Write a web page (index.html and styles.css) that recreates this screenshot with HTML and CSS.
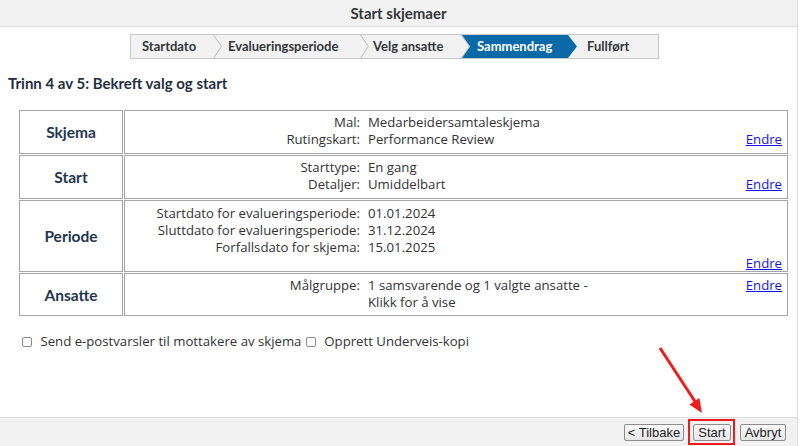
FILE: index.html
```html
<!DOCTYPE html>
<html lang="no">
<head>
    <meta charset="UTF-8">
    <meta name="viewport" content="width=device-width, initial-scale=1.0">
    <title>Start skjemaer</title>
    <link rel="stylesheet" href="styles.css">
</head>
<body>
    <div class="page">
        <div class="titlebar">Start skjemaer</div>

        <div class="content">
            <div class="wizard">
                <div class="step step-1">Startdato</div>
                <div class="step step-2">Evalueringsperiode</div>
                <div class="step step-3">Velg ansatte</div>
                <div class="step step-4 active">Sammendrag</div>
                <div class="step step-5">Fullført</div>
            </div>

            <h1 class="step-title">Trinn 4 av 5: Bekreft valg og start</h1>

            <table class="summary">
                <tr class="row-skjema">
                    <th>Skjema</th>
                    <td>
                        <div class="info">
                            <span class="label">Mal:</span><span class="value">Medarbeidersamtaleskjema</span>
                            <span class="label">Rutingskart:</span><span class="value">Performance Review</span>
                            <a class="endre" href="#">Endre</a>
                        </div>
                    </td>
                </tr>
                <tr class="row-start">
                    <th>Start</th>
                    <td>
                        <div class="info">
                            <span class="label">Starttype:</span><span class="value">En gang</span>
                            <span class="label">Detaljer:</span><span class="value">Umiddelbart</span>
                            <a class="endre" href="#">Endre</a>
                        </div>
                    </td>
                </tr>
                <tr class="row-periode">
                    <th>Periode</th>
                    <td>
                        <div class="info">
                            <span class="label">Startdato for evalueringsperiode:</span><span class="value">01.01.2024</span>
                            <span class="label">Sluttdato for evalueringsperiode:</span><span class="value">31.12.2024</span>
                            <span class="label">Forfallsdato for skjema:</span><span class="value">15.01.2025</span>
                            <a class="endre" href="#">Endre</a>
                        </div>
                    </td>
                </tr>
                <tr class="row-ansatte">
                    <th>Ansatte</th>
                    <td>
                        <div class="info">
                            <span class="label">Målgruppe:</span><span class="value">1 samsvarende og 1 valgte ansatte - Klikk for å vise</span>
                            <a class="endre" href="#">Endre</a>
                        </div>
                    </td>
                </tr>
            </table>

            <div class="options">
                <label><input type="checkbox"> Send e-postvarsler til mottakere av skjema</label>
                <label><input type="checkbox"> Opprett Underveis-kopi</label>
            </div>
        </div>

        <div class="footer">
            <button class="btn btn-back">&lt; Tilbake</button>
            <span class="highlight"><button class="btn btn-start">Start</button></span>
            <button class="btn btn-cancel">Avbryt</button>
        </div>

        <!-- annotation arrow pointing at the Start button -->
        <svg class="arrow" width="70" height="80" viewBox="0 0 70 80">
            <line x1="10" y1="8" x2="46" y2="63" stroke="#ee1c1c" stroke-width="3"/>
            <polygon points="52,73 39.4,64.5 49.4,57.9" fill="#ee1c1c"/>
        </svg>
    </div>
</body>
</html>
```

FILE: styles.css
```css
body {
    margin: 0;
    font-family: "Open Sans", "Noto Sans", sans-serif;
    color: #333;
    background: #fff;
}
.page {
    position: relative;
    width: 797px;
    height: 446px;
    border-right: 1px solid #d9d9d9;
    display: flex;
    flex-direction: column;
}
.titlebar {
    height: 26px;
    line-height: 26px;
    background: #f2f2f2;
    border-bottom: 1px solid #dcdcdc;
    text-align: center;
    font-family: "Lato", sans-serif;
    font-weight: bold;
    font-size: 15px;
    color: #32363a;
}
.content {
    flex: 1;
    padding: 0 8px;
}

/* wizard steps */
.wizard {
    display: inline-flex;
    margin: 7px 0 0 122px;
    border: 1px solid #c8c8c8;
    background: #f2f2f2;
}
.step {
    position: relative;
    height: 23px;
    line-height: 23px;
    padding-left: 13px;
    box-sizing: border-box;
    font-family: "Lato", sans-serif;
    font-weight: bold;
    font-size: 13px;
    color: #32363a;
}
.step-1 { width: 82px; padding-left: 11px; }
.step-2 { width: 147px; padding-left: 15px; }
.step-3 { width: 101px; }
.step-4 { width: 116px; padding-left: 16px; }
.step-5 { width: 81px; padding-left: 10px; }
.step-1::after, .step-2::after, .step-3::after {
    content: "";
    position: absolute;
    left: 100%;
    top: 0;
    width: 9px;
    height: 100%;
    background: #c4c4c4;
    clip-path: polygon(0 0, 1.2px 0, 100% 50%, 1.2px 100%, 0 100%, calc(100% - 1.2px) 50%);
    z-index: 1;
}
.step.active {
    background: #0a6aa8;
    color: #fff;
    clip-path: polygon(0 0, calc(100% - 9px) 0, 100% 50%, calc(100% - 9px) 100%, 0 100%, 9px 50%);
}

.step-title {
    margin: 15px 0 0 0;
    font-family: "Lato", sans-serif;
    font-size: 15px;
    line-height: 18px;
    color: #1f2f40;
}

/* summary table */
.summary {
    margin: 17px 0 0 10px;
    width: 771px;
    table-layout: fixed;
    border-collapse: separate;
    border-spacing: 1px;
    font-size: 13.2px;
}
.summary th, .summary td {
    border: 1px solid #a6a6a6;
}
.summary th {
    width: 102px;
    padding: 0;
    font-family: "Lato", sans-serif;
    font-size: 15.5px;
    color: #1f3650;
    text-align: center;
    vertical-align: middle;
}
.summary td {
    padding: 3px 5px 5px 0;
    line-height: 17px;
}
.info {
    display: grid;
    grid-template-columns: 235px 226px 1fr;
    column-gap: 8px;
}
.label {
    grid-column: 1;
    text-align: right;
    white-space: nowrap;
}
.value {
    grid-column: 2;
}
.endre {
    grid-column: 3;
    grid-row: 1 / span 2;
    align-self: end;
    justify-self: end;
    color: #1414e0;
}
.row-periode td {
    padding: 4px 5px 0 0;
}
.row-periode .endre {
    grid-row: 4;
    line-height: 15px;
}
.row-ansatte td {
    padding: 3px 5px 4px 0;
}
.row-ansatte .endre {
    grid-row: 1;
    align-self: start;
}

/* options */
.options {
    margin: 15px 0 0 13px;
    font-size: 13.2px;
    line-height: 18px;
}
.options input {
    appearance: none;
    width: 10px;
    height: 10px;
    margin: 0 5px 0 1px;
    border: 1px solid #8a8a8a;
    border-radius: 2px;
    background: #fff;
    vertical-align: -1px;
}

/* footer */
.footer {
    height: 28px;
    background: #f2f2f2;
    border-top: 1px solid #dcdcdc;
    display: flex;
    justify-content: flex-end;
    align-items: center;
    padding-right: 11px;
}
.btn {
    height: 17px;
    padding: 0;
    font-family: "Liberation Sans", Arial, sans-serif;
    font-size: 13px;
    line-height: 15px;
    color: #222;
    background: linear-gradient(#fafafa, #e6e6e6);
    border: 1px solid #8c8c8c;
    border-radius: 2px;
}
.btn-back { width: 60px; margin-right: 4px; }
.btn-start { width: 38px; }
.btn-cancel { width: 46px; }
.highlight {
    display: inline-flex;
    padding: 3px 2px 2px 3px;
    border: 2px solid #ee1c1c;
    margin: 0 5px 0 0;
}
.arrow {
    position: absolute;
    left: 650px;
    top: 340px;
}
```
